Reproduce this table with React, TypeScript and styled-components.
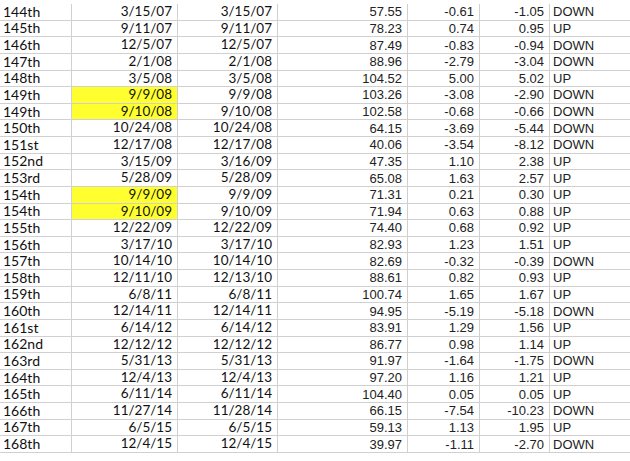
import * as React from "react";
import styled, { createGlobalStyle } from "styled-components";

const GlobalStyle = createGlobalStyle`
  html, body {
    margin: 0;
    padding: 0;
    background: #ffffff;
  }
`;

type TRow = {
  rank: string;
  date1: string;
  date2: string;
  close: string;
  chg1: string;
  chg2: string;
  dir: string;
  marked?: boolean;
};

const rows: TRow[] = [
  { rank: "144th", date1: "3/15/07", date2: "3/15/07", close: "57.55", chg1: "-0.61", chg2: "-1.05", dir: "DOWN" },
  { rank: "145th", date1: "9/11/07", date2: "9/11/07", close: "78.23", chg1: "0.74", chg2: "0.95", dir: "UP" },
  { rank: "146th", date1: "12/5/07", date2: "12/5/07", close: "87.49", chg1: "-0.83", chg2: "-0.94", dir: "DOWN" },
  { rank: "147th", date1: "2/1/08", date2: "2/1/08", close: "88.96", chg1: "-2.79", chg2: "-3.04", dir: "DOWN" },
  { rank: "148th", date1: "3/5/08", date2: "3/5/08", close: "104.52", chg1: "5.00", chg2: "5.02", dir: "UP" },
  { rank: "149th", date1: "9/9/08", date2: "9/9/08", close: "103.26", chg1: "-3.08", chg2: "-2.90", dir: "DOWN", marked: true },
  { rank: "149th", date1: "9/10/08", date2: "9/10/08", close: "102.58", chg1: "-0.68", chg2: "-0.66", dir: "DOWN", marked: true },
  { rank: "150th", date1: "10/24/08", date2: "10/24/08", close: "64.15", chg1: "-3.69", chg2: "-5.44", dir: "DOWN" },
  { rank: "151st", date1: "12/17/08", date2: "12/17/08", close: "40.06", chg1: "-3.54", chg2: "-8.12", dir: "DOWN" },
  { rank: "152nd", date1: "3/15/09", date2: "3/16/09", close: "47.35", chg1: "1.10", chg2: "2.38", dir: "UP" },
  { rank: "153rd", date1: "5/28/09", date2: "5/28/09", close: "65.08", chg1: "1.63", chg2: "2.57", dir: "UP" },
  { rank: "154th", date1: "9/9/09", date2: "9/9/09", close: "71.31", chg1: "0.21", chg2: "0.30", dir: "UP", marked: true },
  { rank: "154th", date1: "9/10/09", date2: "9/10/09", close: "71.94", chg1: "0.63", chg2: "0.88", dir: "UP", marked: true },
  { rank: "155th", date1: "12/22/09", date2: "12/22/09", close: "74.40", chg1: "0.68", chg2: "0.92", dir: "UP" },
  { rank: "156th", date1: "3/17/10", date2: "3/17/10", close: "82.93", chg1: "1.23", chg2: "1.51", dir: "UP" },
  { rank: "157th", date1: "10/14/10", date2: "10/14/10", close: "82.69", chg1: "-0.32", chg2: "-0.39", dir: "DOWN" },
  { rank: "158th", date1: "12/11/10", date2: "12/13/10", close: "88.61", chg1: "0.82", chg2: "0.93", dir: "UP" },
  { rank: "159th", date1: "6/8/11", date2: "6/8/11", close: "100.74", chg1: "1.65", chg2: "1.67", dir: "UP" },
  { rank: "160th", date1: "12/14/11", date2: "12/14/11", close: "94.95", chg1: "-5.19", chg2: "-5.18", dir: "DOWN" },
  { rank: "161st", date1: "6/14/12", date2: "6/14/12", close: "83.91", chg1: "1.29", chg2: "1.56", dir: "UP" },
  { rank: "162nd", date1: "12/12/12", date2: "12/12/12", close: "86.77", chg1: "0.98", chg2: "1.14", dir: "UP" },
  { rank: "163rd", date1: "5/31/13", date2: "5/31/13", close: "91.97", chg1: "-1.64", chg2: "-1.75", dir: "DOWN" },
  { rank: "164th", date1: "12/4/13", date2: "12/4/13", close: "97.20", chg1: "1.16", chg2: "1.21", dir: "UP" },
  { rank: "165th", date1: "6/11/14", date2: "6/11/14", close: "104.40", chg1: "0.05", chg2: "0.05", dir: "UP" },
  { rank: "166th", date1: "11/27/14", date2: "11/28/14", close: "66.15", chg1: "-7.54", chg2: "-10.23", dir: "DOWN" },
  { rank: "167th", date1: "6/5/15", date2: "6/5/15", close: "59.13", chg1: "1.13", chg2: "1.95", dir: "UP" },
  { rank: "168th", date1: "12/4/15", date2: "12/4/15", close: "39.97", chg1: "-1.11", chg2: "-2.70", dir: "DOWN" },
];

const Sheet = styled.div`
  width: 630px;
  padding-top: 4px;
  display: grid;
  grid-template-columns: 72px 106px 100px 130px 72px 70px 80px;
  grid-auto-rows: 16.63px;
  background: #ffffff;
`;

const Cell = styled.div<{ $font: "calibri" | "arial"; $align: "left" | "right"; $fill?: boolean; $last?: boolean; $size?: number }>`
  box-sizing: border-box;
  display: flex;
  align-items: center;
  justify-content: ${(p) => (p.$align === "right" ? "flex-end" : "flex-start")};
  padding: ${(p) => (p.$align === "right" ? "0 5px 0 0" : "0 0 0 3px")};
  border-bottom: 1px solid #d0d0d0;
  border-right: ${(p) => (p.$last ? "none" : "1px solid #d0d0d0")};
  background: ${(p) => (p.$fill ? "#ffff30" : "transparent")};
  font-family: ${(p) =>
    p.$font === "calibri"
      ? `"Lato", "Open Sans", sans-serif`
      : `"Liberation Sans", Arial, sans-serif`};
  font-size: ${(p) => p.$size ?? (p.$font === "calibri" ? 13.5 : 13)}px;
  color: ${(p) => (p.$font === "calibri" ? "#111111" : "#222222")};
  white-space: nowrap;
  overflow: hidden;
  line-height: 1;
`;

export default function App() {
  return (
    <>
      <GlobalStyle />
      <Sheet>
        {rows.map((r, i) => (
          <React.Fragment key={i}>
            <Cell $font="calibri" $align="left" $size={14}>{r.rank}</Cell>
            <Cell $font="calibri" $align="right" $fill={r.marked}>{r.date1}</Cell>
            <Cell $font="calibri" $align="right">{r.date2}</Cell>
            <Cell $font="arial" $align="right">{r.close}</Cell>
            <Cell $font="arial" $align="right">{r.chg1}</Cell>
            <Cell $font="arial" $align="right">{r.chg2}</Cell>
            <Cell $font="arial" $align="left" $last>{r.dir}</Cell>
          </React.Fragment>
        ))}
      </Sheet>
    </>
  );
}
